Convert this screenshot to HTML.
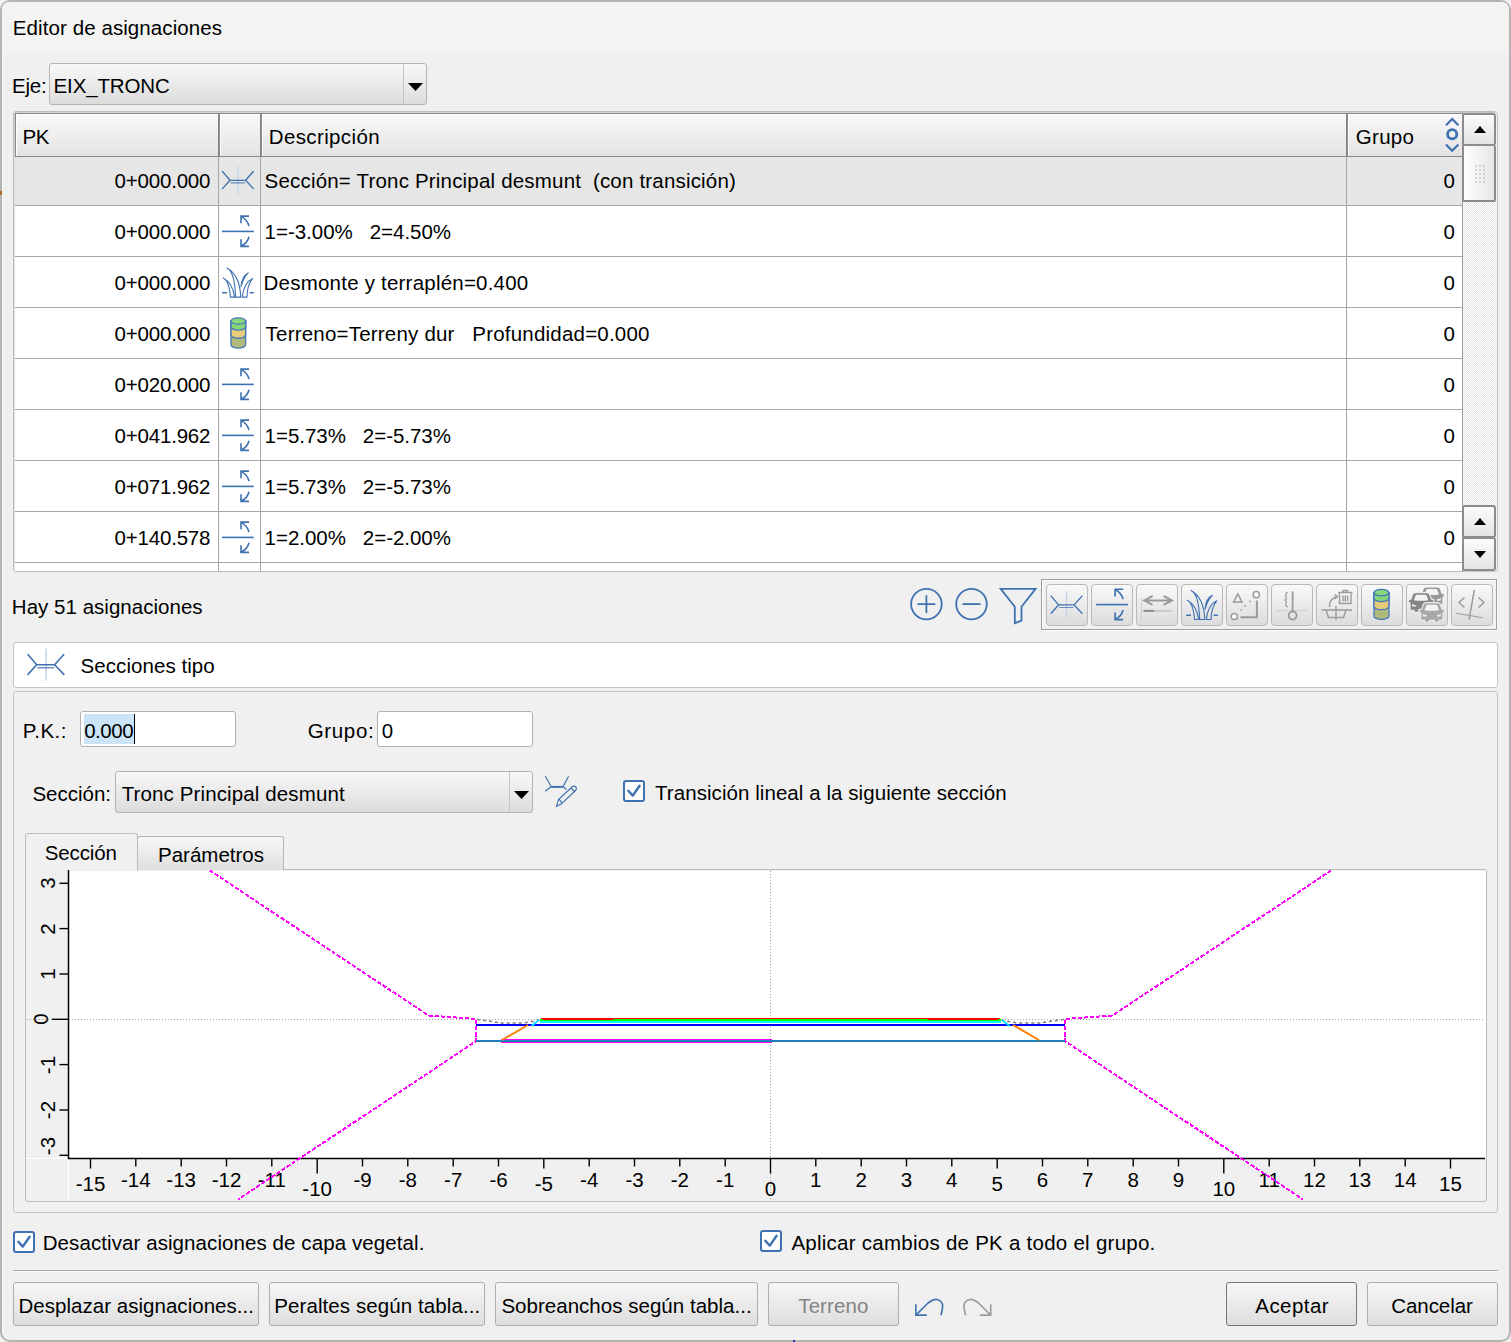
<!DOCTYPE html>
<html><head><meta charset="utf-8"><title>Editor de asignaciones</title>
<style>
html,body{margin:0;padding:0;}
body{width:1511px;height:1342px;position:relative;overflow:hidden;background:#f0f0f0;font-family:"Liberation Sans", sans-serif;}
.t{position:absolute;white-space:pre;line-height:24px;font-family:"Liberation Sans", sans-serif;}
.r{position:absolute;box-sizing:border-box;}
svg.r{overflow:visible;}
.btn{position:absolute;box-sizing:border-box;border:1px solid #adadad;border-radius:3px;background:linear-gradient(#f6f6f6,#dedede);}
.tb{position:absolute;box-sizing:border-box;border:1px solid #b9b9b9;border-radius:4px;background:linear-gradient(#f9f9f9,#dcdcdc);width:42px;height:42px;top:584px;}
</style></head><body>

<div class="r" style="left:0px;top:0px;width:1511px;height:1342px;border:2px solid #b4b4b4;border-radius:10px;background:#f0f0f0;box-shadow:inset 1px 1px 0 #f6f6f6;"></div>
<div class="r" style="left:0px;top:191px;width:2px;height:4px;background:#a86b2c;"></div>
<div class="r" style="left:793px;top:1340px;width:2px;height:2px;background:#2a2ab0;"></div>
<div class="r" style="left:2px;top:2px;width:1507px;height:50px;background:#f3f3f2;border-radius:7px 7px 0 0;"></div>
<div class="t" style="left:12.80px;top:16.00px;font-size:20.5px;color:#000;letter-spacing:0.086px;">Editor de asignaciones</div>
<div class="t" style="left:12.00px;top:73.80px;font-size:20.5px;color:#000;letter-spacing:-0.233px;">Eje:</div>
<div class="r" style="left:49px;top:63px;width:378px;height:42px;border:1px solid #b4b4b4;border-radius:3px;background:linear-gradient(#f8f8f8,#dcdcdc);"></div>
<div class="r" style="left:403px;top:64px;width:1px;height:40px;background:#c4c4c4;"></div>
<svg class="r" style="left:408px;top:83px;" width="15" height="8" viewBox="0 0 15 8"><path d="M0 0H15L7.5 8Z" fill="#000"/></svg>
<div class="t" style="left:53.60px;top:73.80px;font-size:20.5px;color:#000;letter-spacing:-0.150px;">EIX_TRONC</div>
<div class="r" style="left:13px;top:111px;width:1484px;height:461px;border:1px solid #bbbbbb;border-radius:3px;background:#fff;box-shadow:inset 1px 1px 0 #d2d2d2;"></div>
<div class="r" style="left:15px;top:113px;width:1448px;height:44px;border:1px solid #888888;border-right:none;background:linear-gradient(#f9f9f9,#e3e3e3);box-shadow:inset 1px 1px 0 #fff;"></div>
<div class="r" style="left:218px;top:114px;width:3px;height:42px;background:linear-gradient(90deg,#858585 0 1px,#8e8e8e 1px 2px,#fdfdfd 2px);"></div>
<div class="r" style="left:260px;top:114px;width:3px;height:42px;background:linear-gradient(90deg,#858585 0 1px,#8e8e8e 1px 2px,#fdfdfd 2px);"></div>
<div class="r" style="left:1346px;top:114px;width:3px;height:42px;background:linear-gradient(90deg,#858585 0 1px,#8e8e8e 1px 2px,#fdfdfd 2px);"></div>
<div class="r" style="left:14px;top:157px;width:1449px;height:48px;background:#e6e6e6;"></div>
<div class="r" style="left:14px;top:205px;width:1449px;height:1px;background:#a6a6a6;"></div>
<div class="r" style="left:14px;top:256px;width:1449px;height:1px;background:#a6a6a6;"></div>
<div class="r" style="left:14px;top:307px;width:1449px;height:1px;background:#a6a6a6;"></div>
<div class="r" style="left:14px;top:358px;width:1449px;height:1px;background:#a6a6a6;"></div>
<div class="r" style="left:14px;top:409px;width:1449px;height:1px;background:#a6a6a6;"></div>
<div class="r" style="left:14px;top:460px;width:1449px;height:1px;background:#a6a6a6;"></div>
<div class="r" style="left:14px;top:511px;width:1449px;height:1px;background:#a6a6a6;"></div>
<div class="r" style="left:14px;top:562px;width:1449px;height:1px;background:#a6a6a6;"></div>
<div class="r" style="left:218px;top:157px;width:1px;height:414px;background:#a6a6a6;"></div>
<div class="r" style="left:260px;top:157px;width:1px;height:414px;background:#a6a6a6;"></div>
<div class="r" style="left:1346px;top:157px;width:1px;height:414px;background:#a6a6a6;"></div>
<div class="r" style="left:14px;top:157px;width:1px;height:414px;background:#e0e0e0;"></div>
<div class="t" style="left:22.60px;top:125.30px;font-size:20.5px;color:#000;letter-spacing:-0.600px;">PK</div>
<div class="t" style="left:268.80px;top:125.30px;font-size:20.5px;color:#000;letter-spacing:0.370px;">Descripción</div>
<div class="t" style="left:1355.80px;top:125.30px;font-size:20.5px;color:#000;letter-spacing:0.300px;">Grupo</div>
<svg class="r" style="left:1443px;top:117px;" width="18" height="36" viewBox="0 0 18 36"><g fill="none" stroke="#3e71b0" stroke-width="2.2"><path d="M3 8.2L9.2 2L15.4 8.2"/><circle cx="9.2" cy="17.2" r="4.6" stroke-width="2.8"/><path d="M3 27.5L9.2 33.7L15.4 27.5"/></g></svg>
<div class="t" style="left:114.60px;top:168.90px;font-size:20.5px;color:#000;letter-spacing:-0.200px;">0+000.000</div>
<div class="t" style="left:264.60px;top:168.90px;font-size:20.5px;color:#000;letter-spacing:0.188px;">Sección= Tronc Principal desmunt  (con transición)</div>
<div class="t" style="left:1443.50px;top:168.90px;font-size:20.5px;color:#000;">0</div>
<svg class="r" style="left:0;top:0" width="1" height="1"><g transform="translate(222,166.3) scale(1.0)" fill="none" stroke-linecap="round"><line x1="16" y1="0.7" x2="16" y2="27.2" stroke="#c5d3e6" stroke-width="1.3"/><path d="M0.5 5.2L8 14L0.5 22.3M31.4 5.2L23.5 14L31.4 22.3M8 14H23.5" stroke="#3e71b0" stroke-width="1.35"/><path d="M9 16.6H22.5" stroke="#3e71b0" stroke-width="1.2" opacity="0.75"/></g></svg>
<div class="t" style="left:114.60px;top:219.90px;font-size:20.5px;color:#000;letter-spacing:-0.200px;">0+000.000</div>
<div class="t" style="left:264.60px;top:219.90px;font-size:20.5px;color:#000;letter-spacing:-0.024px;">1=-3.00%   2=4.50%</div>
<div class="t" style="left:1443.50px;top:219.90px;font-size:20.5px;color:#000;">0</div>
<svg class="r" style="left:0;top:0" width="1" height="1"><g transform="translate(222,231.4)" fill="none" stroke="#3e71b0" stroke-width="1.6"><path d="M0 0H31.8"/><path d="M27 -5.3Q25.5 -11.5 19.5 -14.8M19 -8.2V-15.3H27"/><path d="M27 5.4Q25.5 11.6 19.5 14.6M19 7.9V15H27"/></g></svg>
<div class="t" style="left:114.60px;top:270.90px;font-size:20.5px;color:#000;letter-spacing:-0.200px;">0+000.000</div>
<div class="t" style="left:263.60px;top:270.90px;font-size:20.5px;color:#000;letter-spacing:0.216px;">Desmonte y terraplén=0.400</div>
<div class="t" style="left:1443.50px;top:270.90px;font-size:20.5px;color:#000;">0</div>
<svg class="r" style="left:0;top:0" width="1" height="1"><g transform="translate(222,266.4)" fill="none" stroke="#3e71b0" stroke-width="1.1" stroke-linejoin="round"><path d="M1.2 11.5Q7 14 8.5 30.7H12.5Q11 17 1.2 11.5Z"/><path d="M4.9 1.7Q13 6 13.5 30.7H18.7Q18 9 4.9 1.7Z"/><path d="M26.2 6.5Q20 9 19 20.3Q21.5 11 26.2 6.5Z"/><path d="M30.6 12Q22 16 20.2 30.7H25Q25 19 30.6 12Z"/><path d="M0.1 26.4H4.9M27.6 26.4H31.7" stroke-width="1.5"/></g></svg>
<div class="t" style="left:114.60px;top:321.90px;font-size:20.5px;color:#000;letter-spacing:-0.200px;">0+000.000</div>
<div class="t" style="left:265.60px;top:321.90px;font-size:20.5px;color:#000;letter-spacing:0.205px;">Terreno=Terreny dur   Profundidad=0.000</div>
<div class="t" style="left:1443.50px;top:321.90px;font-size:20.5px;color:#000;">0</div>
<svg class="r" style="left:0;top:0" width="1" height="1"><g transform="translate(231,317.8)" stroke="#4577b8" stroke-width="1.3"><path d="M0 3.2V27.1A7.3 3.2 0 0 0 14.6 27.1V3.2Z" fill="#b0ba7c"/><path d="M0 3.2V17.270999999999997A7.3 3.2 0 0 0 14.6 17.270999999999997V3.2Z" fill="#e6cc7a"/><path d="M0 3.2V9.09A7.3 3.2 0 0 0 14.6 9.09V3.2Z" fill="#86d579"/><ellipse cx="7.3" cy="3.2" rx="7.3" ry="3.2" fill="#8ad87c"/></g></svg>
<div class="t" style="left:114.60px;top:372.90px;font-size:20.5px;color:#000;letter-spacing:-0.200px;">0+020.000</div>
<div class="t" style="left:1443.50px;top:372.90px;font-size:20.5px;color:#000;">0</div>
<svg class="r" style="left:0;top:0" width="1" height="1"><g transform="translate(222,384.4)" fill="none" stroke="#3e71b0" stroke-width="1.6"><path d="M0 0H31.8"/><path d="M27 -5.3Q25.5 -11.5 19.5 -14.8M19 -8.2V-15.3H27"/><path d="M27 5.4Q25.5 11.6 19.5 14.6M19 7.9V15H27"/></g></svg>
<div class="t" style="left:114.60px;top:423.90px;font-size:20.5px;color:#000;letter-spacing:-0.200px;">0+041.962</div>
<div class="t" style="left:264.60px;top:423.90px;font-size:20.5px;color:#000;letter-spacing:-0.035px;">1=5.73%   2=-5.73%</div>
<div class="t" style="left:1443.50px;top:423.90px;font-size:20.5px;color:#000;">0</div>
<svg class="r" style="left:0;top:0" width="1" height="1"><g transform="translate(222,435.4)" fill="none" stroke="#3e71b0" stroke-width="1.6"><path d="M0 0H31.8"/><path d="M27 -5.3Q25.5 -11.5 19.5 -14.8M19 -8.2V-15.3H27"/><path d="M27 5.4Q25.5 11.6 19.5 14.6M19 7.9V15H27"/></g></svg>
<div class="t" style="left:114.60px;top:474.90px;font-size:20.5px;color:#000;letter-spacing:-0.200px;">0+071.962</div>
<div class="t" style="left:264.60px;top:474.90px;font-size:20.5px;color:#000;letter-spacing:-0.035px;">1=5.73%   2=-5.73%</div>
<div class="t" style="left:1443.50px;top:474.90px;font-size:20.5px;color:#000;">0</div>
<svg class="r" style="left:0;top:0" width="1" height="1"><g transform="translate(222,486.4)" fill="none" stroke="#3e71b0" stroke-width="1.6"><path d="M0 0H31.8"/><path d="M27 -5.3Q25.5 -11.5 19.5 -14.8M19 -8.2V-15.3H27"/><path d="M27 5.4Q25.5 11.6 19.5 14.6M19 7.9V15H27"/></g></svg>
<div class="t" style="left:114.60px;top:525.90px;font-size:20.5px;color:#000;letter-spacing:-0.200px;">0+140.578</div>
<div class="t" style="left:264.60px;top:525.90px;font-size:20.5px;color:#000;letter-spacing:-0.035px;">1=2.00%   2=-2.00%</div>
<div class="t" style="left:1443.50px;top:525.90px;font-size:20.5px;color:#000;">0</div>
<svg class="r" style="left:0;top:0" width="1" height="1"><g transform="translate(222,537.4)" fill="none" stroke="#3e71b0" stroke-width="1.6"><path d="M0 0H31.8"/><path d="M27 -5.3Q25.5 -11.5 19.5 -14.8M19 -8.2V-15.3H27"/><path d="M27 5.4Q25.5 11.6 19.5 14.6M19 7.9V15H27"/></g></svg>
<div class="r" style="left:1462px;top:112px;width:36px;height:460px;border:1px solid #c4c4c4;border-radius:3px;background-color:#fff;background-image:linear-gradient(45deg,#e6e6e6 25%,transparent 25%,transparent 75%,#e6e6e6 75%),linear-gradient(45deg,#e6e6e6 25%,transparent 25%,transparent 75%,#e6e6e6 75%);background-size:2px 2px;background-position:0 0,1px 1px;"></div>
<div class="r" style="left:1462px;top:112px;width:1px;height:460px;background:#9a9a9a;"></div>
<div class="r" style="left:1462px;top:113px;width:34px;height:33px;border:2px solid #8c8c8c;border-radius:3px;background:linear-gradient(#fcfcfc,#e3e3e3);"></div>
<svg class="r" style="left:1473.5px;top:126.0px;" width="12" height="7" viewBox="0 0 12 7"><path d="M0 7H12L6 0Z" fill="#000"/></svg>
<div class="r" style="left:1462px;top:145px;width:34px;height:57px;border:2px solid #8c8c8c;border-top-width:1px;border-radius:2px;background:linear-gradient(90deg,#fdfdfd,#f3f3f3 50%,#e6e6e6);"></div>
<svg class="r" style="left:1474px;top:164px;" width="12" height="20" viewBox="0 0 12 20"><rect x="1.3" y="1.2" width="1.3" height="1.3" fill="#a6a6a6"/><rect x="5.35" y="1.2" width="1.3" height="1.3" fill="#a6a6a6"/><rect x="9.4" y="1.2" width="1.3" height="1.3" fill="#a6a6a6"/><rect x="1.3" y="5.25" width="1.3" height="1.3" fill="#a6a6a6"/><rect x="5.35" y="5.25" width="1.3" height="1.3" fill="#a6a6a6"/><rect x="9.4" y="5.25" width="1.3" height="1.3" fill="#a6a6a6"/><rect x="1.3" y="9.299999999999999" width="1.3" height="1.3" fill="#a6a6a6"/><rect x="5.35" y="9.299999999999999" width="1.3" height="1.3" fill="#a6a6a6"/><rect x="9.4" y="9.299999999999999" width="1.3" height="1.3" fill="#a6a6a6"/><rect x="1.3" y="13.349999999999998" width="1.3" height="1.3" fill="#a6a6a6"/><rect x="5.35" y="13.349999999999998" width="1.3" height="1.3" fill="#a6a6a6"/><rect x="9.4" y="13.349999999999998" width="1.3" height="1.3" fill="#a6a6a6"/><rect x="1.3" y="17.4" width="1.3" height="1.3" fill="#a6a6a6"/><rect x="5.35" y="17.4" width="1.3" height="1.3" fill="#a6a6a6"/><rect x="9.4" y="17.4" width="1.3" height="1.3" fill="#a6a6a6"/></svg>
<div class="r" style="left:1462px;top:505px;width:34px;height:33px;border:2px solid #8c8c8c;border-radius:3px;background:linear-gradient(#fcfcfc,#e3e3e3);"></div>
<svg class="r" style="left:1473.5px;top:518.0px;" width="12" height="7" viewBox="0 0 12 7"><path d="M0 7H12L6 0Z" fill="#000"/></svg>
<div class="r" style="left:1462px;top:537px;width:34px;height:34px;border:2px solid #8c8c8c;border-radius:3px;background:linear-gradient(#fcfcfc,#e3e3e3);"></div>
<svg class="r" style="left:1473.5px;top:551.0px;" width="12" height="7" viewBox="0 0 12 7"><path d="M0 0H12L6 7Z" fill="#000"/></svg>
<div class="t" style="left:11.80px;top:594.80px;font-size:20.5px;color:#000;letter-spacing:0.028px;">Hay 51 asignaciones</div>
<svg class="r" style="left:905px;top:584px;" width="140" height="45" viewBox="0 0 140 45"><g fill="none" stroke="#3e71b0" stroke-width="1.8"><circle cx="21.4" cy="20.1" r="15.3"/><path d="M12.5 20.1H30.3M21.4 11.2V29"/><circle cx="66.5" cy="20.1" r="15.3"/><path d="M57.5 20.1H75.5"/><path d="M95.7 4.9H130.6L116.5 22.7V36.6L109.8 39.2V22.7Z" stroke-linejoin="miter"/></g></svg>
<div class="r" style="left:1041px;top:579px;width:456px;height:51px;border:1px solid #9e9e9e;box-shadow:inset 1px 1px 0 #fcfcfc,1px 1px 0 #fbfbfb;"></div>
<div class="tb" style="left:1046px;"></div>
<div class="tb" style="left:1091px;"></div>
<div class="tb" style="left:1136px;"></div>
<div class="tb" style="left:1181px;"></div>
<div class="tb" style="left:1226px;"></div>
<div class="tb" style="left:1271px;"></div>
<div class="tb" style="left:1316px;"></div>
<div class="tb" style="left:1361px;"></div>
<div class="tb" style="left:1406px;"></div>
<div class="tb" style="left:1451px;"></div>
<svg class="r" style="left:0;top:0" width="1" height="1"><g transform="translate(1050.6,590.9) scale(1.0)" fill="none" stroke-linecap="round"><line x1="16" y1="0.7" x2="16" y2="27.2" stroke="#c5d3e6" stroke-width="1.3"/><path d="M0.5 5.2L8 14L0.5 22.3M31.4 5.2L23.5 14L31.4 22.3M8 14H23.5" stroke="#3e71b0" stroke-width="1.35"/><path d="M9 16.6H22.5" stroke="#3e71b0" stroke-width="1.2" opacity="0.75"/></g><g transform="translate(1096.1,604.6)" fill="none" stroke="#3e71b0" stroke-width="1.6"><path d="M0 0H31.8"/><path d="M27 -5.3Q25.5 -11.5 19.5 -14.8M19 -8.2V-15.3H27"/><path d="M27 5.4Q25.5 11.6 19.5 14.6M19 7.9V15H27"/></g><g fill="none" stroke="#9b9b9b" stroke-width="2"><path d="M1144.5 600.4H1171.5M1152.6 596L1144.2 600.4L1152.6 604.9M1163.6 596L1172 600.4L1163.6 604.9"/></g><path d="M1141.5 598V620" stroke="#d0d0d0" stroke-width="1"/><path d="M1143.5 610.9H1172" stroke="#c9c9c9" stroke-width="2"/><path d="M1143.5 610.9H1154" stroke="#8e8e8e" stroke-width="2"/><g transform="translate(1186.1,588.8)" fill="none" stroke="#3e71b0" stroke-width="1.1" stroke-linejoin="round"><path d="M1.2 11.5Q7 14 8.5 30.7H12.5Q11 17 1.2 11.5Z"/><path d="M4.9 1.7Q13 6 13.5 30.7H18.7Q18 9 4.9 1.7Z"/><path d="M26.2 6.5Q20 9 19 20.3Q21.5 11 26.2 6.5Z"/><path d="M30.6 12Q22 16 20.2 30.7H25Q25 19 30.6 12Z"/><path d="M0.1 26.4H4.9M27.6 26.4H31.7" stroke-width="1.5"/></g><g fill="none" stroke="#9b9b9b" stroke-width="1.5"><path d="M1237.8 593.8L1242 601.9H1233.6Z"/><circle cx="1256.3" cy="594.7" r="3.1" fill="#fff"/><circle cx="1234.3" cy="616.5" r="3.1" fill="#fff"/><path d="M1256.9 600.5V617.2H1240.5" stroke-width="2"/></g><g fill="#9b9b9b"><rect x="1249.3" y="600.6" width="1.6" height="1.6"/><rect x="1244.5" y="605" width="1.6" height="1.6"/><rect x="1240.4" y="609.2" width="1.6" height="1.6"/></g><path d="M1276 610.7H1307" stroke="#d2d2d2" stroke-width="1.2"/><g fill="none" stroke="#9b9b9b" stroke-width="1.8"><path d="M1292.6 591.4V611.5"/><circle cx="1292.6" cy="615.5" r="4"/><path d="M1288 592Q1285 593 1286 597Q1287 599 1285 600Q1287 601 1286 603Q1285 606 1288 607" stroke-width="1.3"/></g><g fill="none" stroke="#9b9b9b" stroke-width="1.4"><path d="M1338 592.5H1352.5M1343 592.5V590.5H1347.5V592.5M1339.5 593.5V603.5H1351V593.5M1343 595.5V601.5M1345.3 595.5V601.5M1347.6 595.5V601.5"/><path d="M1329.5 607Q1329 599 1337 596.5M1334.5 594.5L1337.5 596.6L1335 599"/><path d="M1321.5 610H1352M1326 610L1328.5 617.5H1343.5L1346 610M1336 606V620"/></g><g transform="translate(1374,589.4)" stroke="#4577b8" stroke-width="1.3"><path d="M0 3.2V26.8A7.45 3.2 0 0 0 14.9 26.8V3.2Z" fill="#b0ba7c"/><path d="M0 3.2V17.099999999999998A7.45 3.2 0 0 0 14.9 17.099999999999998V3.2Z" fill="#e6cc7a"/><path d="M0 3.2V9.0A7.45 3.2 0 0 0 14.9 9.0V3.2Z" fill="#86d579"/><ellipse cx="7.45" cy="3.2" rx="7.45" ry="3.2" fill="#8ad87c"/></g><g transform="translate(1419.8,587.5)"><path d="M4.2 1Q5 0 7 0H17Q19 0 19.8 1L21.8 6.5L24 6.7V9L22.5 9.3V16.5H18.5V18.5H15V16.5H9V18.5H5.5V16.5H1.5V9.3L0 9V6.7L2.2 6.5Z" fill="#9a9a9a" /><path d="M4.7 6.9L6.4 2.4Q7 1.5 8 1.5H16Q17 1.5 17.6 2.4L19.3 6.9Q12 8 4.7 6.9Z" fill="#f3f3f3"/><path d="M2.8 10.6L7.3 12.2L6.8 13.3H3.3ZM21.2 10.6L16.7 12.2L17.2 13.3H20.7Z" fill="#f3f3f3"/></g><g transform="translate(1409.1,593.3)"><path d="M4.2 1Q5 0 7 0H17Q19 0 19.8 1L21.8 6.5L24 6.7V9L22.5 9.3V16.5H18.5V18.5H15V16.5H9V18.5H5.5V16.5H1.5V9.3L0 9V6.7L2.2 6.5Z" fill="#858585" stroke="#ececec" stroke-width="2.4" paint-order="stroke"/><path d="M4.7 6.9L6.4 2.4Q7 1.5 8 1.5H16Q17 1.5 17.6 2.4L19.3 6.9Q12 8 4.7 6.9Z" fill="#f3f3f3"/><path d="M2.8 10.6L7.3 12.2L6.8 13.3H3.3ZM21.2 10.6L16.7 12.2L17.2 13.3H20.7Z" fill="#f3f3f3"/></g><g transform="translate(1419.8,603.3)"><path d="M4.2 1Q5 0 7 0H17Q19 0 19.8 1L21.8 6.5L24 6.7V9L22.5 9.3V16.5H18.5V18.5H15V16.5H9V18.5H5.5V16.5H1.5V9.3L0 9V6.7L2.2 6.5Z" fill="#a8a8a8" stroke="#ececec" stroke-width="2.4" paint-order="stroke"/><path d="M4.7 6.9L6.4 2.4Q7 1.5 8 1.5H16Q17 1.5 17.6 2.4L19.3 6.9Q12 8 4.7 6.9Z" fill="#f3f3f3"/><path d="M2.8 10.6L7.3 12.2L6.8 13.3H3.3ZM21.2 10.6L16.7 12.2L17.2 13.3H20.7Z" fill="#f3f3f3"/></g><g fill="none" stroke="#9b9b9b" stroke-width="1.5"><path d="M1464.5 597.5L1459 602.5L1464.5 607.5M1478.5 597.5L1484 602.5L1478.5 607.5"/><path d="M1474.4 589.8L1469 619.7"/><path d="M1456.3 613.2L1482.7 617.8" stroke-width="1.1"/></g></svg>
<div class="r" style="left:13px;top:642px;width:1485px;height:46px;border:1px solid #c6c6c6;border-radius:3px;background:#fff;"></div>
<svg class="r" style="left:0;top:0" width="1" height="1"><g transform="translate(27.4,648.5) scale(1.16)" fill="none" stroke-linecap="round"><line x1="16" y1="0.7" x2="16" y2="27.2" stroke="#c5d3e6" stroke-width="1.3"/><path d="M0.5 5.2L8 14L0.5 22.3M31.4 5.2L23.5 14L31.4 22.3M8 14H23.5" stroke="#3e71b0" stroke-width="1.35"/><path d="M9 16.6H22.5" stroke="#3e71b0" stroke-width="1.2" opacity="0.75"/></g></svg>
<div class="t" style="left:80.60px;top:654.10px;font-size:20.5px;color:#000;letter-spacing:0.062px;">Secciones tipo</div>
<div class="r" style="left:13px;top:691px;width:1485px;height:522px;border:1px solid #c2c2c2;border-radius:3px;background:#f0f0f0;"></div>
<div class="t" style="left:22.80px;top:718.70px;font-size:20.5px;color:#000;letter-spacing:0.450px;">P.K.:</div>
<div class="r" style="left:80px;top:711px;width:156px;height:36px;border:1px solid #b1b1b1;border-radius:3px;background:#fff;"></div>
<div class="r" style="left:84px;top:714px;width:51px;height:30px;background:#cce4f7;"></div>
<div class="t" style="left:84.20px;top:718.70px;font-size:20.5px;color:#000;letter-spacing:-0.475px;">0.000</div>
<div class="r" style="left:134px;top:714px;width:1.2px;height:30px;background:#000;"></div>
<div class="t" style="left:307.70px;top:718.50px;font-size:20.5px;color:#000;letter-spacing:0.660px;">Grupo:</div>
<div class="r" style="left:377px;top:711px;width:156px;height:36px;border:1px solid #b1b1b1;border-radius:3px;background:#fff;"></div>
<div class="t" style="left:381.80px;top:718.50px;font-size:20.5px;color:#000;">0</div>
<div class="t" style="left:32.40px;top:781.50px;font-size:20.5px;color:#000;">Sección:</div>
<div class="r" style="left:115px;top:771px;width:418px;height:42px;border:1px solid #b4b4b4;border-radius:3px;background:linear-gradient(#f8f8f8,#dcdcdc);"></div>
<div class="r" style="left:509px;top:772px;width:1px;height:40px;background:#c4c4c4;"></div>
<svg class="r" style="left:513.5px;top:791px;" width="15" height="8" viewBox="0 0 15 8"><path d="M0 0H15L7.5 8Z" fill="#000"/></svg>
<div class="t" style="left:121.70px;top:781.50px;font-size:20.5px;color:#000;letter-spacing:0.123px;">Tronc Principal desmunt</div>
<svg class="r" style="left:540px;top:770px;" width="40" height="40" viewBox="0 0 40 40"><g fill="none" stroke="#3e71b0" stroke-width="1.15"><path d="M5.3 6.3L11.2 16.5L5.3 21.2M28.6 6.3L23.1 16.5L26.4 19.5"/><path d="M11.2 16.9H23.1" stroke-width="2"/><path d="M16.5 36.4L18.5 29.5L32.5 16.5Q34.5 15.5 36 17Q37 19 35.5 20.5L21.5 33.8Z M19 29.2L22 32.8M31 18L34.5 21.5"/></g></svg>
<div class="r" style="left:623px;top:780px;width:22px;height:22px;border:2px solid #3e71b0;border-radius:3px;background:#fff;"></div>
<svg class="r" style="left:623px;top:780px;" width="22" height="22" viewBox="0 0 22 22"><path d="M5.3 10.7L9.8 15.6L16.6 5.8" fill="none" stroke="#3e71b0" stroke-width="2.4" stroke-linecap="round" stroke-linejoin="round"/></svg>
<div class="t" style="left:655.00px;top:780.60px;font-size:20.5px;color:#000;letter-spacing:0.064px;">Transición lineal a la siguiente sección</div>
<div class="r" style="left:25px;top:869px;width:1462px;height:333px;border:1px solid #bdbdbd;border-radius:0 3px 3px 3px;background:#f0f0f0;"></div>
<div class="r" style="left:137px;top:836px;width:147px;height:34px;border:1px solid #b5b5b5;border-bottom:none;border-radius:3px 3px 0 0;background:linear-gradient(#f8f8f8,#dedede);"></div>
<div class="r" style="left:25px;top:833px;width:113px;height:38px;border:1px solid #bdbdbd;border-bottom:none;border-radius:3px 3px 0 0;background:#f0f0f0;"></div>
<div class="t" style="left:44.70px;top:841.40px;font-size:20.5px;color:#000;letter-spacing:-0.117px;">Sección</div>
<div class="t" style="left:158.00px;top:842.90px;font-size:20.5px;color:#000;">Parámetros</div>
<div class="r" style="left:68px;top:871px;width:1418px;height:288px;background:#fff;"></div>
<div class="r" style="left:26px;top:1158px;width:42px;height:1px;background:#fff;"></div>
<div class="r" style="left:68px;top:1158px;width:1px;height:42px;background:#fff;"></div>
<svg class="r" style="left:0;top:0" width="1" height="1"><path d="M27 1019.5H1485" stroke="#a2a2a2" stroke-width="1" stroke-dasharray="1 2"/><path d="M770.5 871V1200" stroke="#a2a2a2" stroke-width="1" stroke-dasharray="1 2"/><path d="M68.5 870V1158.6H1485" fill="none" stroke="#000" stroke-width="1.5"/><path d="M59.5 1155.3H68" stroke="#000" stroke-width="1.4"/><path d="M59.5 1110.0H68" stroke="#000" stroke-width="1.4"/><path d="M59.5 1064.6H68" stroke="#000" stroke-width="1.4"/><path d="M52.0 1019.3H68" stroke="#000" stroke-width="1.4"/><path d="M59.5 974.0H68" stroke="#000" stroke-width="1.4"/><path d="M59.5 928.6H68" stroke="#000" stroke-width="1.4"/><path d="M59.5 883.3H68" stroke="#000" stroke-width="1.4"/><path d="M90.5 1158V1168.5" stroke="#000" stroke-width="1.4"/><path d="M135.8 1158V1166.5" stroke="#000" stroke-width="1.4"/><path d="M181.2 1158V1166.5" stroke="#000" stroke-width="1.4"/><path d="M226.5 1158V1166.5" stroke="#000" stroke-width="1.4"/><path d="M271.8 1158V1166.5" stroke="#000" stroke-width="1.4"/><path d="M317.2 1158V1173.5" stroke="#000" stroke-width="1.4"/><path d="M362.5 1158V1166.5" stroke="#000" stroke-width="1.4"/><path d="M407.8 1158V1166.5" stroke="#000" stroke-width="1.4"/><path d="M453.2 1158V1166.5" stroke="#000" stroke-width="1.4"/><path d="M498.5 1158V1166.5" stroke="#000" stroke-width="1.4"/><path d="M543.8 1158V1168.5" stroke="#000" stroke-width="1.4"/><path d="M589.2 1158V1166.5" stroke="#000" stroke-width="1.4"/><path d="M634.5 1158V1166.5" stroke="#000" stroke-width="1.4"/><path d="M679.8 1158V1166.5" stroke="#000" stroke-width="1.4"/><path d="M725.2 1158V1166.5" stroke="#000" stroke-width="1.4"/><path d="M770.5 1158V1173.5" stroke="#000" stroke-width="1.4"/><path d="M815.8 1158V1166.5" stroke="#000" stroke-width="1.4"/><path d="M861.2 1158V1166.5" stroke="#000" stroke-width="1.4"/><path d="M906.5 1158V1166.5" stroke="#000" stroke-width="1.4"/><path d="M951.8 1158V1166.5" stroke="#000" stroke-width="1.4"/><path d="M997.2 1158V1168.5" stroke="#000" stroke-width="1.4"/><path d="M1042.5 1158V1166.5" stroke="#000" stroke-width="1.4"/><path d="M1087.8 1158V1166.5" stroke="#000" stroke-width="1.4"/><path d="M1133.2 1158V1166.5" stroke="#000" stroke-width="1.4"/><path d="M1178.5 1158V1166.5" stroke="#000" stroke-width="1.4"/><path d="M1223.8 1158V1173.5" stroke="#000" stroke-width="1.4"/><path d="M1269.2 1158V1166.5" stroke="#000" stroke-width="1.4"/><path d="M1314.5 1158V1166.5" stroke="#000" stroke-width="1.4"/><path d="M1359.8 1158V1166.5" stroke="#000" stroke-width="1.4"/><path d="M1405.2 1158V1166.5" stroke="#000" stroke-width="1.4"/><path d="M1450.5 1158V1168.5" stroke="#000" stroke-width="1.4"/></svg>
<div class="t" style="left:50.5px;width:80px;text-align:center;top:1172.2px;font-size:20.5px;">-15</div>
<div class="t" style="left:95.8px;width:80px;text-align:center;top:1167.7px;font-size:20.5px;">-14</div>
<div class="t" style="left:141.2px;width:80px;text-align:center;top:1167.7px;font-size:20.5px;">-13</div>
<div class="t" style="left:186.5px;width:80px;text-align:center;top:1167.7px;font-size:20.5px;">-12</div>
<div class="t" style="left:231.8px;width:80px;text-align:center;top:1167.7px;font-size:20.5px;">-11</div>
<div class="t" style="left:277.2px;width:80px;text-align:center;top:1177.2px;font-size:20.5px;">-10</div>
<div class="t" style="left:322.5px;width:80px;text-align:center;top:1167.7px;font-size:20.5px;">-9</div>
<div class="t" style="left:367.8px;width:80px;text-align:center;top:1167.7px;font-size:20.5px;">-8</div>
<div class="t" style="left:413.2px;width:80px;text-align:center;top:1167.7px;font-size:20.5px;">-7</div>
<div class="t" style="left:458.5px;width:80px;text-align:center;top:1167.7px;font-size:20.5px;">-6</div>
<div class="t" style="left:503.8px;width:80px;text-align:center;top:1172.2px;font-size:20.5px;">-5</div>
<div class="t" style="left:549.2px;width:80px;text-align:center;top:1167.7px;font-size:20.5px;">-4</div>
<div class="t" style="left:594.5px;width:80px;text-align:center;top:1167.7px;font-size:20.5px;">-3</div>
<div class="t" style="left:639.8px;width:80px;text-align:center;top:1167.7px;font-size:20.5px;">-2</div>
<div class="t" style="left:685.2px;width:80px;text-align:center;top:1167.7px;font-size:20.5px;">-1</div>
<div class="t" style="left:730.5px;width:80px;text-align:center;top:1177.2px;font-size:20.5px;">0</div>
<div class="t" style="left:775.8px;width:80px;text-align:center;top:1167.7px;font-size:20.5px;">1</div>
<div class="t" style="left:821.2px;width:80px;text-align:center;top:1167.7px;font-size:20.5px;">2</div>
<div class="t" style="left:866.5px;width:80px;text-align:center;top:1167.7px;font-size:20.5px;">3</div>
<div class="t" style="left:911.8px;width:80px;text-align:center;top:1167.7px;font-size:20.5px;">4</div>
<div class="t" style="left:957.2px;width:80px;text-align:center;top:1172.2px;font-size:20.5px;">5</div>
<div class="t" style="left:1002.5px;width:80px;text-align:center;top:1167.7px;font-size:20.5px;">6</div>
<div class="t" style="left:1047.8px;width:80px;text-align:center;top:1167.7px;font-size:20.5px;">7</div>
<div class="t" style="left:1093.2px;width:80px;text-align:center;top:1167.7px;font-size:20.5px;">8</div>
<div class="t" style="left:1138.5px;width:80px;text-align:center;top:1167.7px;font-size:20.5px;">9</div>
<div class="t" style="left:1183.8px;width:80px;text-align:center;top:1177.2px;font-size:20.5px;">10</div>
<div class="t" style="left:1229.2px;width:80px;text-align:center;top:1167.7px;font-size:20.5px;">11</div>
<div class="t" style="left:1274.5px;width:80px;text-align:center;top:1167.7px;font-size:20.5px;">12</div>
<div class="t" style="left:1319.8px;width:80px;text-align:center;top:1167.7px;font-size:20.5px;">13</div>
<div class="t" style="left:1365.2px;width:80px;text-align:center;top:1167.7px;font-size:20.5px;">14</div>
<div class="t" style="left:1410.5px;width:80px;text-align:center;top:1172.2px;font-size:20.5px;">15</div>
<div class="t" style="left:8.0px;width:80px;text-align:center;top:1134.0px;font-size:20.5px;transform:rotate(-90deg);">-3</div>
<div class="t" style="left:8.0px;width:80px;text-align:center;top:1098.0px;font-size:20.5px;transform:rotate(-90deg);">-2</div>
<div class="t" style="left:8.0px;width:80px;text-align:center;top:1052.6px;font-size:20.5px;transform:rotate(-90deg);">-1</div>
<div class="t" style="left:0.8px;width:80px;text-align:center;top:1007.3px;font-size:20.5px;transform:rotate(-90deg);">0</div>
<div class="t" style="left:8.0px;width:80px;text-align:center;top:962.0px;font-size:20.5px;transform:rotate(-90deg);">1</div>
<div class="t" style="left:8.0px;width:80px;text-align:center;top:916.6px;font-size:20.5px;transform:rotate(-90deg);">2</div>
<div class="t" style="left:8.0px;width:80px;text-align:center;top:871.3px;font-size:20.5px;transform:rotate(-90deg);">3</div>
<svg class="r" style="left:0;top:0;overflow:visible" width="1" height="1"><defs><clipPath id="cp"><rect x="25" y="870" width="1461" height="331"/></clipPath></defs><g clip-path="url(#cp)"><g fill="none" stroke="#ff00ff" stroke-width="2" stroke-dasharray="4.2 1.9" shape-rendering="crispEdges"><path d="M209.8 870.5L428.5 1015.5L475.9 1019.0L475.9 1041.3L238.0 1199.5"/><path d="M1331.2 870.5L1112.5 1015.5L1065.1 1019.0L1065.1 1041.3L1303.0 1199.5"/></g><g fill="none" stroke="#7a7a7a" stroke-width="1.5" stroke-dasharray="3 3"><path d="M477 1019.5Q490 1021 500 1023H522Q532 1022 541 1019.5"/><path d="M1064.0 1019.5Q1051.0 1021 1041.0 1023H1019.0Q1009.0 1022 1000.0 1019.5"/></g><path d="M501 1041H772" stroke="#ff00ff" stroke-width="4"/><path d="M476 1041H1065" stroke="#1e7fb8" stroke-width="2"/><path d="M476 1025H1065" stroke="#0000ff" stroke-width="2"/><path d="M502 1040L528 1025M1039.0 1040L1013.0 1025" stroke="#ff8000" stroke-width="2"/><path d="M540 1022H1001.0" stroke="#00ffff" stroke-width="2"/><path d="M531.5 1026L539 1020M1009.5 1026L1002.0 1020" stroke="#00e0ff" stroke-width="1.8"/><path d="M540 1020H1001.0" stroke="#00ff00" stroke-width="2"/><path d="M541 1018.5H1000.0" stroke="#ff0000" stroke-width="1"/><path d="M543 1019H613M928.0 1019H998.0" stroke="#ff0000" stroke-width="2"/></g></svg>
<div class="r" style="left:13px;top:1231px;width:22px;height:22px;border:2px solid #3e71b0;border-radius:3px;background:#fff;"></div>
<svg class="r" style="left:13px;top:1231px;" width="22" height="22" viewBox="0 0 22 22"><path d="M5.3 10.7L9.8 15.6L16.6 5.8" fill="none" stroke="#3e71b0" stroke-width="2.4" stroke-linecap="round" stroke-linejoin="round"/></svg>
<div class="t" style="left:42.70px;top:1231.30px;font-size:20.5px;color:#000;letter-spacing:0.085px;">Desactivar asignaciones de capa vegetal.</div>
<div class="r" style="left:760px;top:1230px;width:22px;height:22px;border:2px solid #3e71b0;border-radius:3px;background:#fff;"></div>
<svg class="r" style="left:760px;top:1230px;" width="22" height="22" viewBox="0 0 22 22"><path d="M5.3 10.7L9.8 15.6L16.6 5.8" fill="none" stroke="#3e71b0" stroke-width="2.4" stroke-linecap="round" stroke-linejoin="round"/></svg>
<div class="t" style="left:791.40px;top:1231.30px;font-size:20.5px;color:#000;letter-spacing:0.257px;">Aplicar cambios de PK a todo el grupo.</div>
<div class="r" style="left:13px;top:1270px;width:1485px;height:1px;background:#a9a9a9;"></div>
<div class="r" style="left:13px;top:1271px;width:1485px;height:1px;background:#fbfbfb;"></div>
<div class="btn" style="left:13px;top:1282px;width:246px;height:44px;border-color:#adadad;"></div>
<div class="t" style="left:18.50px;top:1294.10px;font-size:20.5px;color:#000;letter-spacing:0.029px;">Desplazar asignaciones...</div>
<div class="btn" style="left:269px;top:1282px;width:216px;height:44px;border-color:#adadad;"></div>
<div class="t" style="left:274.30px;top:1294.10px;font-size:20.5px;color:#000;letter-spacing:0.086px;">Peraltes según tabla...</div>
<div class="btn" style="left:495px;top:1282px;width:263px;height:44px;border-color:#adadad;"></div>
<div class="t" style="left:501.40px;top:1294.10px;font-size:20.5px;color:#000;letter-spacing:0.028px;">Sobreanchos según tabla...</div>
<div class="btn" style="left:768px;top:1282px;width:131px;height:44px;border-color:#adadad;"></div>
<div class="t" style="left:798.30px;top:1294.10px;font-size:20.5px;color:#838383;letter-spacing:0.083px;">Terreno</div>
<div class="btn" style="left:1226px;top:1282px;width:131px;height:44px;border-color:#767676;"></div>
<div class="t" style="left:1255.30px;top:1294.10px;font-size:20.5px;color:#000;letter-spacing:0.450px;">Aceptar</div>
<div class="btn" style="left:1367px;top:1282px;width:131px;height:44px;border-color:#adadad;"></div>
<div class="t" style="left:1391.30px;top:1294.10px;font-size:20.5px;color:#000;letter-spacing:-0.071px;">Cancelar</div>
<svg class="r" style="left:905px;top:1290px;" width="100" height="35" viewBox="0 0 100 35"><g fill="none" stroke-width="1.6"><path d="M10.9 25.1L23 13Q29 8.7 32 9.5Q38.5 11 37.5 18Q37 21 36 25.3M10.9 14.2V25.1H21.8" stroke="#3e71b0"/><path d="M85.7 25.1L73.6 13Q67.6 8.7 64.6 9.5Q58.1 11 59.1 18Q59.6 21 60.6 25.3M85.7 14.2V25.1H74.8" stroke="#9a9a9a"/></g></svg>
</body></html>
